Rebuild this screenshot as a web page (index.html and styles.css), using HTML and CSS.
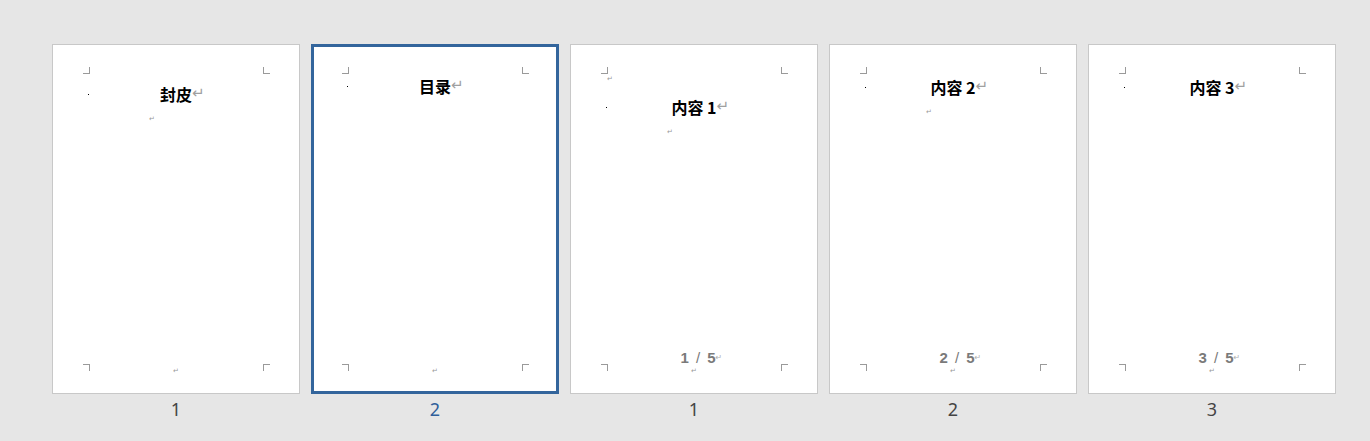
FILE: index.html
```html
<!DOCTYPE html>
<html lang="zh-CN">
<head>
<meta charset="utf-8">
<title>页面缩略图</title>
<link rel="stylesheet" href="styles.css">
</head>
<body>
<div class="strip">
  <div class="thumb">
    <div class="page">
      <span class="crop tl"></span><span class="crop tr"></span><span class="crop bl"></span><span class="crop br"></span>
      <div class="title t-cover"><span class="dot"></span>封皮<span class="pm">↵</span></div>
      <div class="mini after">↵</div>
      <div class="footer">
        <div class="mini center">↵</div>
      </div>
    </div>
    <div class="label">1</div>
  </div>

  <div class="thumb">
    <div class="page selected">
      <span class="crop tl"></span><span class="crop tr"></span><span class="crop bl"></span><span class="crop br"></span>
      <div class="title t-toc"><span class="dot"></span>目录<span class="pm">↵</span></div>
      <div class="footer">
        <div class="mini center">↵</div>
      </div>
    </div>
    <div class="label selected">2</div>
  </div>

  <div class="thumb">
    <div class="page">
      <span class="crop tl"></span><span class="crop tr"></span><span class="crop bl"></span><span class="crop br"></span>
      <div class="mini lead">↵</div>
      <div class="title t-body1"><span class="dot"></span>内容 1<span class="pm">↵</span></div>
      <div class="mini after">↵</div>
      <div class="footer">
        <div class="pagenum">1 <span class="sl">/</span> 5<span class="pm small">↵</span></div>
        <div class="mini center">↵</div>
      </div>
    </div>
    <div class="label">1</div>
  </div>

  <div class="thumb">
    <div class="page">
      <span class="crop tl"></span><span class="crop tr"></span><span class="crop bl"></span><span class="crop br"></span>
      <div class="title t-body"><span class="dot"></span>内容 2<span class="pm">↵</span></div>
      <div class="mini after">↵</div>
      <div class="footer">
        <div class="pagenum">2 <span class="sl">/</span> 5<span class="pm small">↵</span></div>
        <div class="mini center">↵</div>
      </div>
    </div>
    <div class="label">2</div>
  </div>

  <div class="thumb">
    <div class="page">
      <span class="crop tl"></span><span class="crop tr"></span><span class="crop bl"></span><span class="crop br"></span>
      <div class="title t-body"><span class="dot"></span>内容 3<span class="pm">↵</span></div>
      <div class="footer">
        <div class="pagenum">3 <span class="sl">/</span> 5<span class="pm small">↵</span></div>
        <div class="mini center">↵</div>
      </div>
    </div>
    <div class="label">3</div>
  </div>
</div>
</body>
</html>
```

FILE: styles.css
```css
html, body {
  margin: 0;
  padding: 0;
  background: #e6e6e6;
}

body {
  width: 1370px;
  height: 441px;
  overflow: hidden;
  font-family: "Noto Sans", "Noto Sans CJK SC", sans-serif;
}

.strip {
  display: flex;
  gap: 11px;
  padding: 44px 0 0 52px;
}

.thumb {
  display: flex;
  flex-direction: column;
  width: 248px;
}

.page {
  position: relative;
  box-sizing: border-box;
  width: 248px;
  height: 350px;
  background: #fff;
  border: 1px solid #c8c8c8;
  display: flex;
  flex-direction: column;
}

.page.selected {
  border-color: #33659c;
  box-shadow: inset 0 0 0 2px #33659c;
}

/* crop marks */
.crop {
  position: absolute;
  box-sizing: border-box;
  width: 7px;
  height: 7px;
  border: 0 solid #9a9a9a;
}
.crop.tl { left: 30px; top: 22px; border-right-width: 1px; border-bottom-width: 1px; }
.crop.tr { left: 210px; top: 22px; border-left-width: 1px; border-bottom-width: 1px; }
.crop.bl { left: 30px; top: 319px; border-right-width: 1px; border-top-width: 1px; }
.crop.br { left: 210px; top: 319px; border-left-width: 1px; border-top-width: 1px; }

/* title line */
.title {
  position: relative;
  height: 20px;
  line-height: 20px;
  text-align: center;
  font-family: "Noto Sans CJK SC", "Liberation Sans", sans-serif;
  font-size: 16px;
  font-weight: 700;
  color: #000;
  white-space: nowrap;
}
.t-cover { margin-top: 39px; }
.t-toc { margin-top: 31px; }
.t-body1 { margin-top: 13px; }
.t-body { margin-top: 32px; }

.dot {
  position: absolute;
  left: 35px;
  top: 10px;
  width: 1px;
  height: 1px;
  background: #000;
}

.pm {
  display: inline-block;
  width: 0;
  overflow: visible;
  font-family: "DejaVu Sans", sans-serif;
  font-weight: 400;
  font-size: 15px;
  line-height: 18px;
  color: #a0a0a0;
  vertical-align: top;
}
.pm.small {
  font-size: 8px;
  line-height: 16px;
  color: #b0b0b0;
}

/* tiny paragraph marks */
.mini {
  height: 10px;
  line-height: 10px;
  font-family: "DejaVu Sans", sans-serif;
  font-size: 7px;
  color: #999;
  white-space: nowrap;
}
.mini.lead { margin-top: 29px; padding-left: 36px; }
.mini.after { margin-top: 10px; padding-left: 96px; }
.mini.center { text-align: center; }

.footer {
  margin-top: auto;
  padding-bottom: 17px;
  display: flex;
  flex-direction: column;
}

.pagenum {
  height: 16px;
  line-height: 16px;
  padding-left: 8px;
  text-align: center;
  font-family: "Liberation Sans", sans-serif;
  font-size: 15px;
  font-weight: 700;
  color: #7a7a7a;
  word-spacing: 3px;
  white-space: nowrap;
}
.pagenum .sl { font-weight: 400; }

.label {
  margin-top: 3px;
  text-align: center;
  font-size: 18px;
  line-height: 24px;
  color: #444;
}
.label.selected { color: #2f5f9a; }
```
